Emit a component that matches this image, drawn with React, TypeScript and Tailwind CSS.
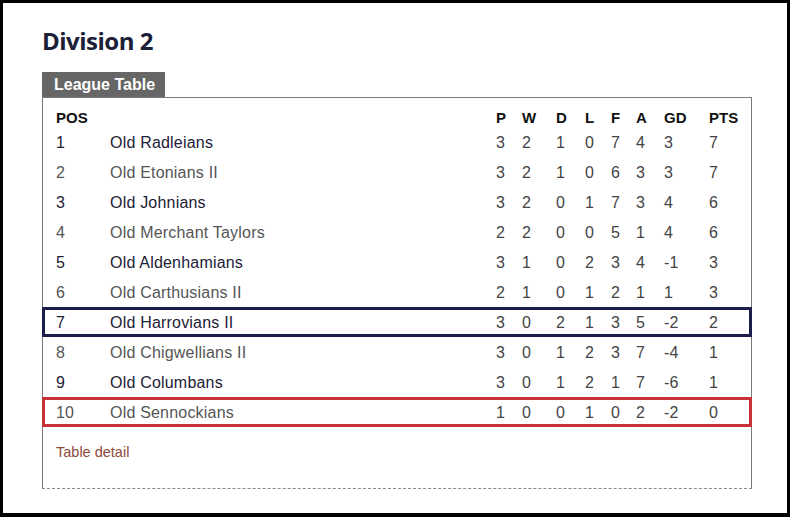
import React from "react";

type Row = {
  pos: number;
  team: string;
  p: number;
  w: number;
  d: number;
  l: number;
  f: number;
  a: number;
  gd: number;
  pts: number;
  mark?: "navy" | "red";
};

const rows: Row[] = [
  { pos: 1, team: "Old Radleians", p: 3, w: 2, d: 1, l: 0, f: 7, a: 4, gd: 3, pts: 7 },
  { pos: 2, team: "Old Etonians II", p: 3, w: 2, d: 1, l: 0, f: 6, a: 3, gd: 3, pts: 7 },
  { pos: 3, team: "Old Johnians", p: 3, w: 2, d: 0, l: 1, f: 7, a: 3, gd: 4, pts: 6 },
  { pos: 4, team: "Old Merchant Taylors", p: 2, w: 2, d: 0, l: 0, f: 5, a: 1, gd: 4, pts: 6 },
  { pos: 5, team: "Old Aldenhamians", p: 3, w: 1, d: 0, l: 2, f: 3, a: 4, gd: -1, pts: 3 },
  { pos: 6, team: "Old Carthusians II", p: 2, w: 1, d: 0, l: 1, f: 2, a: 1, gd: 1, pts: 3 },
  { pos: 7, team: "Old Harrovians II", p: 3, w: 0, d: 2, l: 1, f: 3, a: 5, gd: -2, pts: 2, mark: "navy" },
  { pos: 8, team: "Old Chigwellians II", p: 3, w: 0, d: 1, l: 2, f: 3, a: 7, gd: -4, pts: 1 },
  { pos: 9, team: "Old Columbans", p: 3, w: 0, d: 1, l: 2, f: 1, a: 7, gd: -6, pts: 1 },
  { pos: 10, team: "Old Sennockians", p: 1, w: 0, d: 0, l: 1, f: 0, a: 2, gd: -2, pts: 0, mark: "red" },
];

const grid =
  "grid grid-cols-[54px_1fr_26px_34px_29px_26px_25px_28px_45px_42px] items-center";

export default function App() {
  return (
    <div
      className="w-[790px] h-[517px] bg-white border-black border-t-[3px] border-b-[4px] border-x-[3px] box-border pl-[39px] pr-[35px]"
      style={{ fontFamily: '"Liberation Sans", Arial, sans-serif' }}
    >
      <h1
        className="mt-[20px] h-[36px] leading-[36px] text-[24px] font-bold text-[#1b2036] tracking-[-0.5px]"
        style={{ fontFamily: '"Open Sans", "Noto Sans", sans-serif' }}
      >
        Division 2
      </h1>
      <div className="mt-[13px] flex">
        <div className="h-[25px] bg-[#666666] text-white font-bold text-[16px] leading-[25px] pl-[12px] pr-[10px]">
          League Table
        </div>
      </div>
      <div className="border border-[#7a7a7a] [border-bottom-style:dashed] border-b-[#8a8a8a]">
        <div className="pt-[9px]">
          <div className={`${grid} h-[20px] pl-[13px] text-[15px] font-bold text-[#111]`}>
            <div>POS</div>
            <div></div>
            <div>P</div>
            <div>W</div>
            <div>D</div>
            <div>L</div>
            <div>F</div>
            <div>A</div>
            <div>GD</div>
            <div>PTS</div>
          </div>
          {rows.map((r) => {
            const dark = r.pos % 2 === 1;
            const nameColor = dark ? "text-[#1d2036]" : "text-[#555555]";
            const ring =
              r.mark === "navy"
                ? "ring-[3px] ring-inset ring-[#1c1d4a]"
                : r.mark === "red"
                ? "ring-[3px] ring-inset ring-[#c8313a]"
                : "";
            return (
              <div
                key={r.pos}
                className={`${grid} h-[30px] -mx-px pl-[14px] pr-px pt-[2px] text-[16px] tracking-[0.2px] ${ring}`}
              >
                <div className={nameColor}>{r.pos}</div>
                <div className={nameColor}>{r.team}</div>
                <div className="text-[#444]">{r.p}</div>
                <div className="text-[#444]">{r.w}</div>
                <div className="text-[#444]">{r.d}</div>
                <div className="text-[#444]">{r.l}</div>
                <div className="text-[#444]">{r.f}</div>
                <div className="text-[#444]">{r.a}</div>
                <div className="text-[#444]">{r.gd}</div>
                <div className="text-[#444]">{r.pts}</div>
              </div>
            );
          })}
        </div>
        <div className="pt-[15px] pb-[26px] pl-[13px]">
          <a className="block h-[20px] leading-[20px] text-[14.5px] text-[#8e4a3b]">Table detail</a>
        </div>
      </div>
    </div>
  );
}
